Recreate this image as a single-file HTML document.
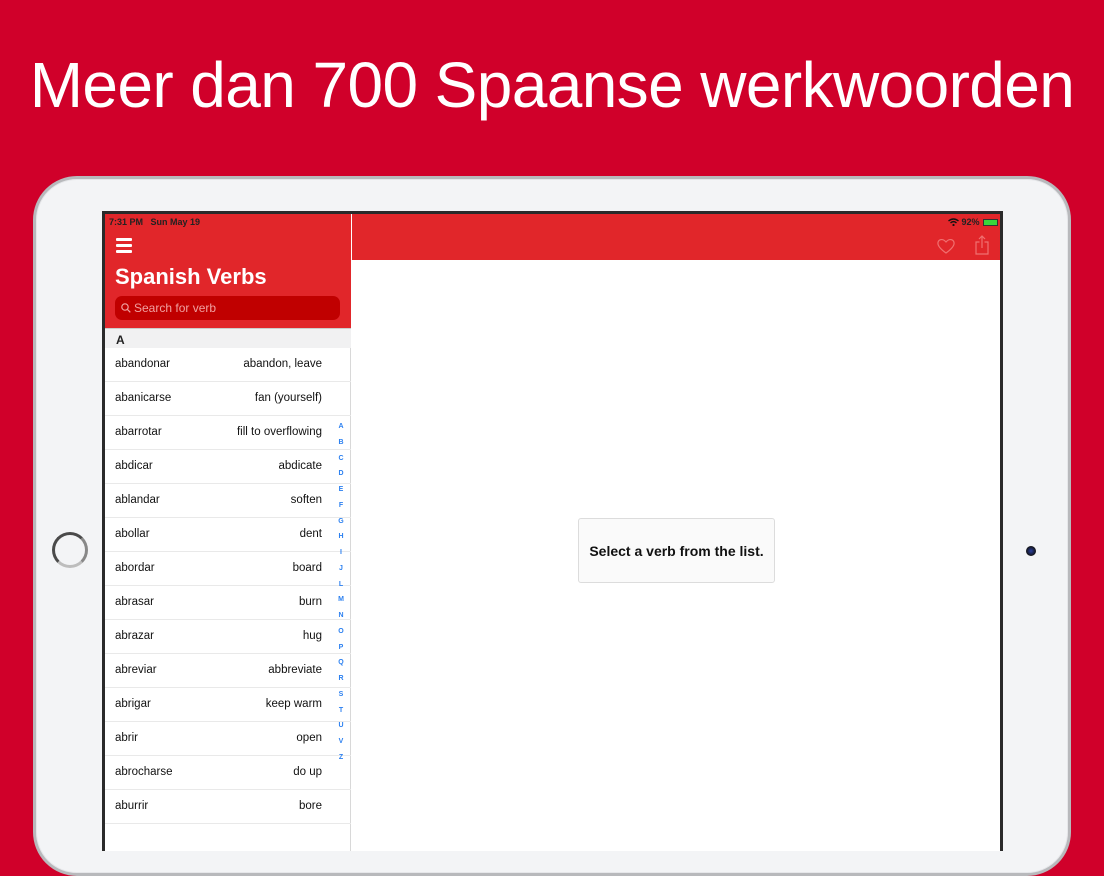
<!DOCTYPE html>
<html><head><meta charset="utf-8"><style>
*{margin:0;padding:0;box-sizing:border-box}
body{width:1104px;height:828px;overflow:hidden;background:#d0002a;font-family:"Liberation Sans",sans-serif;position:relative}
.title{position:absolute;left:0;width:1104px;top:48px;text-align:center;color:#fff;font-size:64px;letter-spacing:-0.6px}
.ipad{position:absolute;left:33px;top:176px;width:1038px;height:700px;border-radius:44px;background:#f3f4f6;border:3px solid #b8b9bc;box-shadow:inset 0 0 0 1px #e6e7ea}
.home{position:absolute;left:52px;top:532px;width:36px;height:36px;border-radius:50%;border:3px solid #4a4a4a;border-bottom-color:#bdbdbd;border-right-color:#888}
.cam{position:absolute;left:1026px;top:546px;width:10px;height:10px;border-radius:50%;background:radial-gradient(#2a3fa0,#111 70%)}
.screen{position:absolute;left:102px;top:211px;width:901px;height:640px;background:#fff;border:3px solid #2a2a2a;border-bottom:none;overflow:hidden}
.side{position:absolute;left:0;top:0;width:246px;height:640px;border-right:1px solid #d8d8d8;background:#fff}
.shead{position:absolute;left:0;top:0;width:246px;height:114px;background:#e1262a}
.status{position:absolute;top:3px;font-size:9px;color:#222;font-weight:bold}
.menu{position:absolute;left:11px;top:24px;width:16px}
.menu i{display:block;height:2.5px;background:#fff;margin-bottom:3.5px;border-radius:1px}
.sv{position:absolute;left:10px;top:50px;font-size:22px;font-weight:bold;color:#fff}
.search{position:absolute;left:10px;top:82px;width:225px;height:24px;background:#c00000;border-radius:7px;color:#f0a0a0;font-size:12px;padding:5px 0 0 19px}
.search svg{position:absolute;left:6px;top:7px}
.sec{position:absolute;left:0;top:114px;width:246px;height:20px;background:#f1f1f2;font-size:12px;font-weight:bold;color:#222;padding:4px 0 0 11px;border-top:1px solid #ccc}
.row{position:absolute;left:0;width:246px;height:34px;border-bottom:1px solid #e9e9e9;font-size:11.5px;color:#111}
.row .l{position:absolute;left:10px;top:10px}
.row .r{position:absolute;right:29px;top:10px}
.idx{position:absolute;left:232px;font-size:7px;color:#2a7ff0;font-weight:bold;width:8px;text-align:center}
.dhead{position:absolute;left:247px;top:0;width:654px;height:46px;background:#e1262a}
.card{position:absolute;left:473px;top:304px;width:197px;height:65px;background:#fafafa;border:1px solid #dcdcdc;border-radius:3px;font-size:14px;font-weight:bold;color:#111;text-align:center;padding-top:24px}
</style></head><body>
<div class="title">Meer dan 700 Spaanse werkwoorden</div>
<div class="ipad"></div>
<div class="home"></div>
<div class="cam"></div>
<div class="screen">
 <div class="dhead">
  <div class="status" style="left:596px;color:#222">
   <svg width="11" height="8" viewBox="0 0 11 8" style="vertical-align:-1px"><path d="M0.5 3 Q5.5 -1 10.5 3" stroke="#111" stroke-width="1.4" fill="none"/><path d="M2.5 5 Q5.5 2.3 8.5 5" stroke="#111" stroke-width="1.4" fill="none"/><circle cx="5.5" cy="7" r="1.1" fill="#111"/></svg> 92%
   <span style="display:inline-block;width:15px;height:7px;border:1px solid #333;vertical-align:-1px;background:#3bd53b;margin-left:1px"></span>
  </div>
  <svg style="position:absolute;left:585px;top:24px" width="18" height="16" viewBox="0 0 18 16"><path d="M9 15 C2 10 0.5 7 1 4.5 C1.6 1.5 5.5 0 9 4 C12.5 0 16.4 1.5 17 4.5 C17.5 7 16 10 9 15Z" fill="none" stroke="#f07070" stroke-width="1.2"/></svg>
  <svg style="position:absolute;left:623px;top:21px" width="14" height="20" viewBox="0 0 14 20"><path d="M4.5 7 H1 V19 H13 V7 H9.5 M7 13 V1 M4 4 L7 1 L10 4" fill="none" stroke="#f07070" stroke-width="1.2"/></svg>
 </div>
 <div class="side">
  <div class="shead">
   <div class="status" style="left:4px">7:31 PM&nbsp;&nbsp;&nbsp;Sun May 19</div>
   <div class="menu"><i></i><i></i><i></i></div>
   <div class="sv">Spanish Verbs</div>
   <div class="search"><svg width="10" height="10" viewBox="0 0 10 10"><circle cx="4" cy="4" r="3.2" stroke="#f0a0a0" stroke-width="1.2" fill="none"/><path d="M6.4 6.4 L9.3 9.3" stroke="#f0a0a0" stroke-width="1.2"/></svg>Search for verb</div>
  </div>
  <div class="sec">A</div>
  <div class="row" style="top:134px"><span class="l">abandonar</span><span class="r">abandon, leave</span></div>
  <div class="row" style="top:168px"><span class="l">abanicarse</span><span class="r">fan (yourself)</span></div>
  <div class="row" style="top:202px"><span class="l">abarrotar</span><span class="r">fill to overflowing</span></div>
  <div class="row" style="top:236px"><span class="l">abdicar</span><span class="r">abdicate</span></div>
  <div class="row" style="top:270px"><span class="l">ablandar</span><span class="r">soften</span></div>
  <div class="row" style="top:304px"><span class="l">abollar</span><span class="r">dent</span></div>
  <div class="row" style="top:338px"><span class="l">abordar</span><span class="r">board</span></div>
  <div class="row" style="top:372px"><span class="l">abrasar</span><span class="r">burn</span></div>
  <div class="row" style="top:406px"><span class="l">abrazar</span><span class="r">hug</span></div>
  <div class="row" style="top:440px"><span class="l">abreviar</span><span class="r">abbreviate</span></div>
  <div class="row" style="top:474px"><span class="l">abrigar</span><span class="r">keep warm</span></div>
  <div class="row" style="top:508px"><span class="l">abrir</span><span class="r">open</span></div>
  <div class="row" style="top:542px"><span class="l">abrocharse</span><span class="r">do up</span></div>
  <div class="row" style="top:576px"><span class="l">aburrir</span><span class="r">bore</span></div>
  <div class="row" style="top:610px"><span class="l"></span></div>
  <div class="idx" style="top:209px">A</div><div class="idx" style="top:225px">B</div><div class="idx" style="top:241px">C</div><div class="idx" style="top:256px">D</div><div class="idx" style="top:272px">E</div><div class="idx" style="top:288px">F</div><div class="idx" style="top:304px">G</div><div class="idx" style="top:319px">H</div><div class="idx" style="top:335px">I</div><div class="idx" style="top:351px">J</div><div class="idx" style="top:367px">L</div><div class="idx" style="top:382px">M</div><div class="idx" style="top:398px">N</div><div class="idx" style="top:414px">O</div><div class="idx" style="top:430px">P</div><div class="idx" style="top:445px">Q</div><div class="idx" style="top:461px">R</div><div class="idx" style="top:477px">S</div><div class="idx" style="top:493px">T</div><div class="idx" style="top:508px">U</div><div class="idx" style="top:524px">V</div><div class="idx" style="top:540px">Z</div>
 </div>
 <div class="card">Select a verb from the list.</div>
</div>
</body></html>
